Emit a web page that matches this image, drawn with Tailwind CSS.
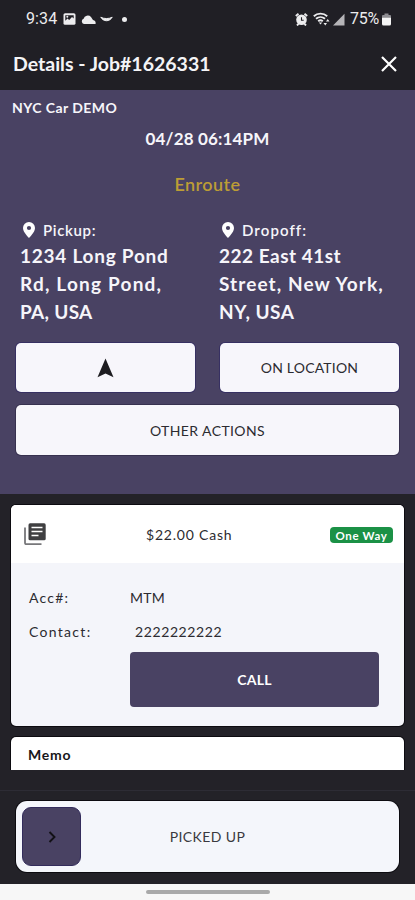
<!DOCTYPE html>
<html lang="en">
<head>
<meta charset="utf-8">
<meta name="viewport" content="width=device-width, initial-scale=1">
<title>Details - Job#1626331</title>
<script src="https://cdn.jsdelivr.net/npm/@tailwindcss/browser@4"></script>
</head>
<body class="w-[415px] h-[900px] overflow-hidden bg-[#232228] font-['Lato',sans-serif] text-white">
<div class="flex flex-col h-[900px]">
  <!-- Status bar -->
  <div class="h-[38px] shrink-0 bg-[#201f25] flex items-center pl-[26px] pr-[24px] text-[#ececee] font-['Roboto',sans-serif] text-[16px]">
    <span class="w-[37px] whitespace-nowrap tracking-[0.1px]">9:34</span>
    <svg class="w-[13px] h-[12px]" viewBox="0 0 13 12"><rect x=".5" y=".2" width="12" height="11.6" rx="1.6" fill="#ececee"/><path d="M2.3 2.2h8.4v3.3L9 4 6.2 7 4.5 5.5 2.3 7.8z" fill="#201f25"/><circle cx="4.3" cy="3.8" r="1" fill="#ececee"/></svg>
    <svg class="ml-[5px] w-[15px] h-[9px]" viewBox="0 0 15 9"><path d="M3 9a2.7 2.7 0 0 1-.4-5.200A4.300 4.300 0 0 1 10 2l2 3c2 .2 3 1.700 2.600 4z" fill="#ececee"/></svg>
    <svg class="ml-[4px] w-[13px] h-[7px]" viewBox="0 0 13 7"><path d="M.8 1.200C3.500 5.900 9.500 5.900 12.200 1.200 9.500 3 3.500 3 .8 1.200z" fill="#ececee" stroke="#ececee" stroke-width="1"/></svg>
    <span class="ml-[9px] size-[5px] rounded-full bg-[#ececee]"></span>
    <span class="grow"></span>
    <svg class="w-[13px] h-[13px]" viewBox="0 0 13 13"><path d="M.8 3 3.500.8M12.200 3 9.500.8M2 12.500l1.500-1.700M11 12.500l-1.500-1.700" stroke="#ececee" stroke-width="1.900"/><circle cx="6.500" cy="6.800" r="5.300" fill="#ececee"/><path d="M6.500 4.200v3h2.200" stroke="#201f25" stroke-width="1.100" fill="none"/></svg>
    <svg class="ml-[5px] w-[17px] h-[14px]" viewBox="0 0 17 14"><g fill="none" stroke="#ececee" stroke-width="1.900"><path d="M.8 4.200C4.500.8 10.500.8 14.200 4.200"/><path d="M3 6.800c2.600-2.300 6.400-2.300 9 0"/><path d="M5.200 9.300c1.400-1.200 3.200-1.200 4.600 0"/></g><path d="m7.500 12.500-1.700-2h3.400zM10.500 11l1.800 2.500 1.700-2.500zM13 9.500l1.700-2.500 1.800 2.500z" fill="#ececee"/></svg>
    <svg class="ml-[3px] w-[12px] h-[13px]" viewBox="0 0 12 13"><path d="M0 12.500 11.500.8v11.700z" fill="#b5b4b8"/></svg>
    <span class="ml-[5px] w-[31px] whitespace-nowrap"><span class="tracking-[-0.2px]">75</span><span>%</span></span>
    <svg class="ml-[1px] w-[9px] h-[13px]" viewBox="0 0 9 13"><path d="M2.500.5h4v1.500H8q1 0 1 1v1.500H0V3q0-1 1-1h1.500z" fill="#8d8c91"/><path d="M0 4.500h9V11q0 1.500-1.500 1.500h-6Q0 12.500 0 11z" fill="#f5f5f5"/></svg>
  </div>
  <!-- Title bar -->
  <header class="h-[52px] shrink-0 bg-[#201f25] flex items-center justify-between pl-[13px] pr-[18px]">
    <h1 class="text-[19.5px] leading-[24px] font-bold tracking-[0px] text-[#f4f4f6]">Details - Job#1626331</h1>
    <svg class="w-[16px] h-[16px]" viewBox="0 0 16 16"><path d="m1 1 14 14M15 1 1 15" stroke="#fff" stroke-width="2.200"/></svg>
  </header>
  <!-- Job summary -->
  <section class="h-[404px] shrink-0 bg-[#494263] flex flex-col text-[#f6f5fa]">
    <p class="pl-[12px] pt-[9px] text-[14px] leading-[18px] font-bold tracking-[0.45px]">NYC Car DEMO</p>
    <p class="mt-[11px] text-center text-[17px] leading-[22px] font-bold tracking-[0.15px]">04/28 06:14PM</p>
    <p class="mt-[22px] text-center text-[18px] leading-[24px] font-semibold tracking-[0.45px] text-[#bd9d35]">Enroute</p>
    <div class="mt-[24px] flex">
      <div class="w-[199px] pl-[20px]">
        <div class="flex items-center pl-[3px] h-[20px]">
          <svg class="w-[12px] h-[16px]" viewBox="0 0 12 16"><path fill-rule="evenodd" d="M6 0a6 6 0 0 0-6 6c0 4.300 6 10 6 10s6-5.700 6-10a6 6 0 0 0-6-6zm0 3.900a2.100 2.100 0 1 1 0 4.200 2.100 2.100 0 0 1 0-4.200z" fill="#fff"/></svg>
          <span class="ml-[8px] text-[15px] font-semibold tracking-[0.65px]">Pickup:</span>
        </div>
        <p class="mt-[2px] text-[19px] leading-[28px] font-bold whitespace-nowrap"><span class="tracking-[0.75px]">1234 Long Pond</span><br><span class="tracking-[1.2px]">Rd, Long Pond,</span><br><span class="tracking-[0.3px]">PA, USA</span></p>
      </div>
      <div class="pl-[20px]">
        <div class="flex items-center pl-[3px] h-[20px]">
          <svg class="w-[12px] h-[16px]" viewBox="0 0 12 16"><path fill-rule="evenodd" d="M6 0a6 6 0 0 0-6 6c0 4.300 6 10 6 10s6-5.700 6-10a6 6 0 0 0-6-6zm0 3.900a2.100 2.100 0 1 1 0 4.200 2.100 2.100 0 0 1 0-4.200z" fill="#fff"/></svg>
          <span class="ml-[8px] text-[15px] font-semibold tracking-[1.1px]">Dropoff:</span>
        </div>
        <p class="mt-[2px] text-[19px] leading-[28px] font-bold whitespace-nowrap"><span class="tracking-[0.5px]">222 East 41st</span><br><span class="tracking-[1.1px]">Street, New York,</span><br><span class="tracking-[0.5px]">NY, USA</span></p>
      </div>
    </div>
    <div class="mt-[17px] px-[16px] grid grid-cols-[179px_179px] justify-between gap-y-[13px] text-[#2c2b31] text-[14px]">
      <button class="h-[49px] rounded-[5px] bg-[#f7f6fb] flex items-center justify-center shadow-[0_0_0_1px_#373062]">
        <svg class="w-[17px] h-[20px]" viewBox="0 0 17 20"><path d="M8.500.5 16.500 19.300 8.500 15.500.5 19.300z" fill="#1d1c20"/></svg>
      </button>
      <button class="h-[49px] rounded-[5px] bg-[#f7f6fb] shadow-[0_0_0_1px_#373062] tracking-[0.2px]">ON LOCATION</button>
      <button class="h-[50px] col-span-2 rounded-[5px] bg-[#f7f6fb] shadow-[0_0_0_1px_#37314f] tracking-[0.4px]">OTHER ACTIONS</button>
    </div>
  </section>
  <!-- Details -->
  <main class="h-[276px] shrink-0 overflow-hidden px-[11px] pt-[11px] text-[#2c2b31]">
    <section class="h-[221px] rounded-[5px] bg-[#f4f5fa] overflow-hidden shadow-[0_0_0_1px_#0c0b10]">
      <div class="h-[58px] bg-white grid grid-cols-[122px_auto_1fr] items-center pl-[13px] pr-[11px]">
        <svg class="w-[22px] h-[22px]" viewBox="0 0 22 22"><path d="M1 4.500V20q0 1.200 1.200 1.200H17.500" fill="none" stroke="#77777a" stroke-width="1.800"/><rect x="4.500" y=".3" width="17.200" height="17" rx="1.600" fill="#3f3f41"/><path d="M7.500 4.500h11M7.500 8.500h11M7.500 12.500h7" stroke="#fff" stroke-width="1.700"/></svg>
        <span class="text-[14px] tracking-[0.8px]">$22.00 Cash</span>
        <span class="justify-self-end mt-[1px] w-[63px] h-[16px] rounded-[4px] bg-[#1b9146] text-white text-[11.500px] leading-[17px] font-bold text-center tracking-[0.600px]">One Way</span>
      </div>
      <div class="pl-[18px] text-[14px] tracking-[1px]">
        <div class="flex h-[34px] mt-[17px] items-center"><span class="w-[101px] tracking-[1.2px]">Acc#:</span><span class="tracking-[0.3px]">MTM</span></div>
        <div class="flex h-[35px] items-center"><span class="w-[106px] tracking-[1.3px]">Contact:</span><span class="tracking-[0.6px]">2222222222</span></div>
        <button class="block ml-[101px] mt-[3px] w-[249px] h-[55px] rounded-[4px] bg-[#494263] text-white font-bold text-[14px] tracking-[0.3px]">CALL</button>
      </div>
    </section>
    <section class="mt-[11px] h-[33px] rounded-t-[5px] bg-white pl-[17px] pt-[9px] shadow-[0_0_0_1px_#0c0b10]">
      <h2 class="text-[14px] leading-[18px] font-bold tracking-[0.8px] text-[#17161a]">Memo</h2>
    </section>
  </main>
  <div class="h-[20px] shrink-0"></div>
  <!-- Slide action -->
  <footer class="h-[94px] shrink-0 border-t border-[#2d2c35] px-[16px] pt-[10px]">
    <div class="relative h-[71px] rounded-[11px] bg-[#f4f6fb] shadow-[0_0_0_1px_#0c0b10] flex items-center justify-center">
      <div class="absolute left-[6px] top-[6px] size-[59px] rounded-[9px] bg-[#494263] border border-[#332c5c] flex items-center justify-center">
        <svg class="w-[8px] h-[12px]" viewBox="0 0 8 12"><path d="m1.500 1 5 5-5 5" fill="none" stroke="#121116" stroke-width="1.900"/></svg>
      </div>
      <span class="text-[14px] tracking-[0.400px] text-[#3a393e]">PICKED UP</span>
    </div>
  </footer>
  <!-- Gesture bar -->
  <div class="grow bg-[#f7f7f7] flex justify-center pt-[6px]"><div class="w-[124px] h-[4px] rounded-full bg-[#a9a9a9]"></div></div>
</div>
</body>
</html>
